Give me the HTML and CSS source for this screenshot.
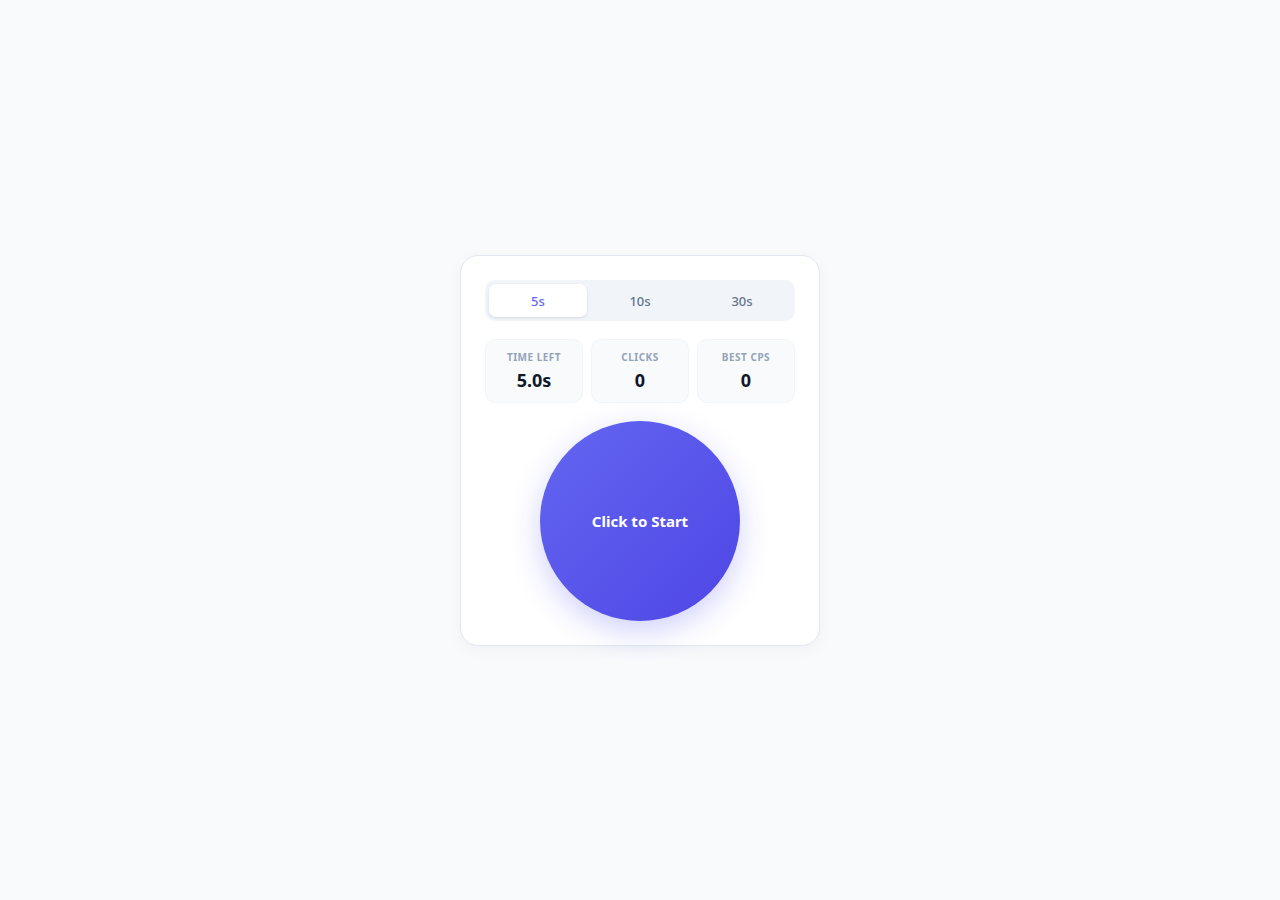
FILE: index.html
```html
<!DOCTYPE html>
<html lang="en">
<head>
<meta charset="utf-8">
<title>CPS Test</title>
<link rel="stylesheet" href="styles.css">
</head>
<body>
<main class="page">
  <section class="card">
    <div class="tabs">
      <button class="tab active">5s</button>
      <button class="tab">10s</button>
      <button class="tab">30s</button>
    </div>
    <div class="stats">
      <div class="stat"><div class="label">Time Left</div><div class="value">5.0s</div></div>
      <div class="stat"><div class="label">Clicks</div><div class="value">0</div></div>
      <div class="stat"><div class="label">Best CPS</div><div class="value">0</div></div>
    </div>
    <div class="button-wrap">
      <button class="click-btn">Click to Start</button>
    </div>
  </section>
</main>
</body>
</html>
```
FILE: styles.css
```css
* { box-sizing: border-box; }
html, body { margin: 0; padding: 0; }
body {
  background: #f8fafc;
  font-family: "Noto Sans", "DejaVu Sans", sans-serif;
  color: #0f172a;
}
.page {
  height: 900px;
  display: flex;
  align-items: center;
  justify-content: center;
}
.card {
  width: 360px;
  background: #ffffff;
  border: 1px solid #e2e8f0;
  border-radius: 18px;
  padding: 24px;
  box-shadow: 0 4px 16px rgba(15, 23, 42, 0.04);
}
.tabs {
  display: grid;
  grid-template-columns: repeat(3, 1fr);
  gap: 4px;
  padding: 4px;
  background: #f1f5f9;
  border-radius: 10px;
}
.tab {
  height: 33px;
  border: 0;
  background: transparent;
  border-radius: 7px;
  font-family: inherit;
  font-size: 13px;
  font-weight: 500;
  color: #64748b;
  padding: 2px 0 0;
}
.tab.active {
  background: #ffffff;
  color: #6366f1;
  box-shadow: 0 1px 3px rgba(15, 23, 42, 0.12);
}
.stats {
  display: grid;
  grid-template-columns: repeat(3, 1fr);
  gap: 8px;
  margin-top: 18px;
}
.stat {
  height: 64px;
  background: #f8fafc;
  border: 1px solid #f1f5f9;
  border-radius: 10px;
  display: flex;
  flex-direction: column;
  align-items: center;
  justify-content: center;
  gap: 4px;
}
.label {
  font-size: 10px;
  font-weight: 700;
  letter-spacing: 0.5px;
  text-transform: uppercase;
  color: #94a3b8;
  line-height: 14px;
}
.value {
  font-size: 18px;
  font-weight: 700;
  color: #0f172a;
  line-height: 24px;
}
.button-wrap {
  display: flex;
  justify-content: center;
  margin-top: 18px;
}
.click-btn {
  width: 200px;
  height: 200px;
  border-radius: 50%;
  border: 0;
  background: linear-gradient(135deg, #6366f1 0%, #4f46e5 100%);
  color: #ffffff;
  font-family: inherit;
  font-size: 15px;
  font-weight: 700;
  box-shadow: 0 10px 30px rgba(99, 102, 241, 0.3);
  cursor: pointer;
}
```
